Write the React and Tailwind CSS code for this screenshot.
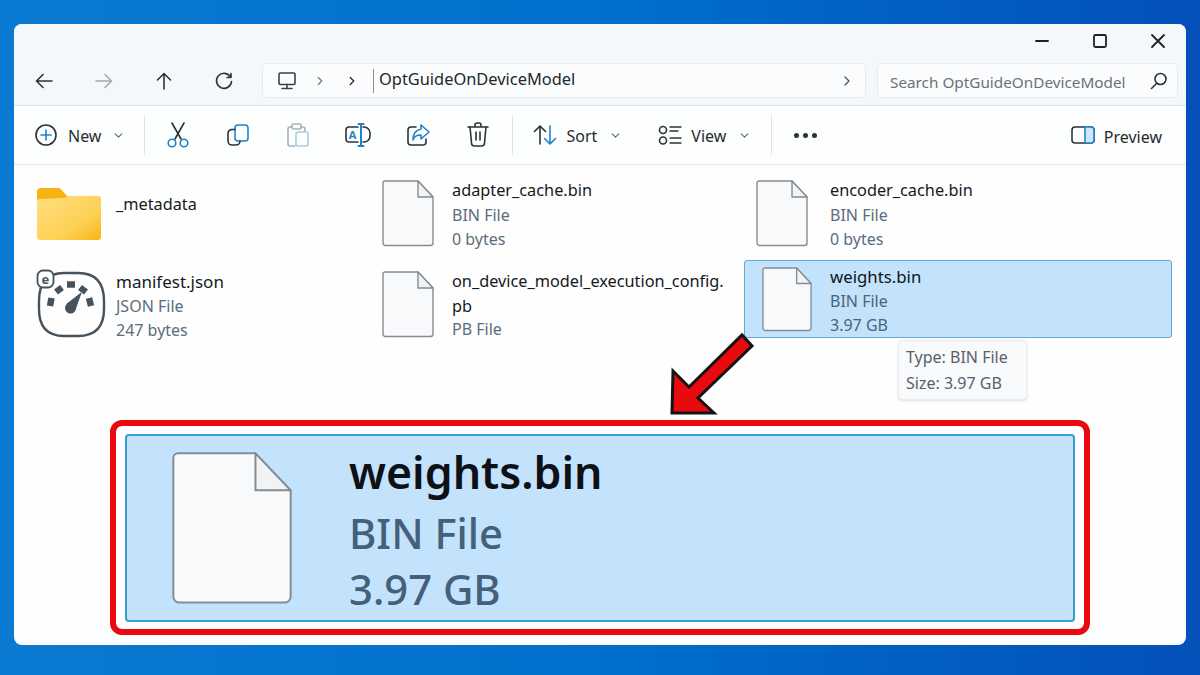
import { ChevronDown, ChevronRight } from 'lucide-react';

const FONT = "font-['Noto_Sans','Open_Sans',sans-serif]";

const Icon = ({ children, w = 24, h = 24, className = '' }) => (
  <svg
    width={w}
    height={h}
    viewBox={`0 0 ${w} ${h}`}
    fill="none"
    stroke="currentColor"
    strokeWidth="1.6"
    strokeLinecap="round"
    strokeLinejoin="round"
    className={className}
  >
    {children}
  </svg>
);

const FileIcon = ({ w = 52, h = 67, line = 1.4 }) => (
  <svg
    width={w}
    height={h}
    viewBox="0 0 52 67"
    preserveAspectRatio="none"
    fill="none"
    stroke="#858c93"
    strokeWidth={line}
    strokeLinejoin="round"
  >
    <path d="M3 1 H36 L51 17 V63 a2.5 2.5 0 0 1 -2.5 2.5 H3.5 A2.5 2.5 0 0 1 1 63 V3 a2 2 0 0 1 2 -2 Z" fill="#f8f9fb" />
    <path d="M36 1 V17 H51 Z" fill="#f1f3f5" />
  </svg>
);

const FolderIcon = () => (
  <svg width="66" height="54" viewBox="0 0 66 54">
    <defs>
      <linearGradient id="folderFront" x1="0" y1="0" x2="1" y2="1">
        <stop offset="0" stopColor="#ffe07f" />
        <stop offset="0.65" stopColor="#fdd055" />
        <stop offset="1" stopColor="#f9b412" />
      </linearGradient>
    </defs>
    <path d="M1 5 a4 4 0 0 1 4 -4 H22 a4 4 0 0 1 3 1.3 L31 9 H60 V30 H1 Z" fill="#f6b312" />
    <path d="M1 14 a3 3 0 0 1 3 -2 L28 11 L33 9 H62 a3 3 0 0 1 3 3 V50 a3 3 0 0 1 -3 3 H4 a3 3 0 0 1 -3 -3 Z" fill="url(#folderFront)" />
  </svg>
);

const ManifestIcon = () => (
  <svg width="70" height="70" viewBox="0 0 70 70" fill="none">
    <path d="M28 4 H42 C60 4 68 14 68 32 V40 C68 58 59 67 42 67 H28 C11 67 3 58 3 40 V32 C3 14 11 4 28 4 Z" stroke="#46535d" strokeWidth="2.4" />
    <rect x="1.500" y="1.500" width="16" height="17" rx="5.500" fill="#fdfefe" stroke="#46535d" strokeWidth="1.800" />
    <text x="9.500" y="14.500" textAnchor="middle" fontSize="13" fontWeight="700" fill="#46535d">e</text>
    <g stroke="#46535d" strokeWidth="6.5">
      <path d="M14 37 L15.500 29" />
      <path d="M20 23 L26 18.500" />
      <path d="M31 15.500 H39" />
      <path d="M44 18.500 L50 23" />
      <path d="M53 29 L55 37" />
    </g>
    <path d="M45 24 L39 41 L31 35 Z" fill="#46535d" stroke="#46535d" strokeWidth="1" strokeLinejoin="round" />
    <circle cx="34.500" cy="39" r="5.500" fill="#46535d" />
  </svg>
);

const NavButton = ({ children }) => (
  <div className="w-[60px] flex items-center justify-center text-[#2c3238]">{children}</div>
);

const ToolButton = ({ children }) => (
  <div className="w-[60px] flex items-center justify-center">{children}</div>
);

const Divider = () => <div className="w-px h-[40px] bg-[#dfe3e7]" />;

const FileItem = ({ icon, iconWidth, name, lines, top = 'pt-0', nameSize = 'text-[16.3px]' }) => (
  <div className={`flex pl-3 ${top}`}>
    <div className={`${iconWidth} shrink-0`}>{icon}</div>
    <div className="text-[16px] leading-[24px]">
      <div className={`${nameSize} leading-[25px] text-[#15191d]`}>{name}</div>
      {lines.map((line) => (
        <div key={line} className="text-[#5a6d7c]">{line}</div>
      ))}
    </div>
  </div>
);

export default function App() {
  return (
    <div className={`w-[1200px] h-[675px] overflow-hidden pt-[24px] pl-[14px] bg-linear-to-r from-[#0a7ad2] via-[#0070cc] to-[#0450b8] ${FONT}`}>
      <div className="relative w-[1172px] h-[621px] rounded-[8px] overflow-hidden bg-[#fefefe] flex flex-col">
        {/* title + address */}
        <div className="h-[82px] bg-[#f4f8fb] border-b border-[#dde3e8] shrink-0">
          <div className="h-[39px] flex justify-end -mr-[1px] pb-[5px] text-[#1d2226]">
            <div className="w-[58px] flex items-center justify-center">
              <Icon w={16} h={16}><path d="M2 8 H14" strokeWidth="1.8" /></Icon>
            </div>
            <div className="w-[58px] flex items-center justify-center">
              <Icon w={16} h={16}><rect x="2" y="2" width="12" height="12" rx="1.5" strokeWidth="1.8" /></Icon>
            </div>
            <div className="w-[58px] flex items-center justify-center">
              <Icon w={16} h={16}><path d="M2 2 L14 14 M14 2 L2 14" strokeWidth="1.8" /></Icon>
            </div>
          </div>
          <div className="h-[35px] flex">
            <NavButton>
              <Icon w={20} h={20}><path d="M18 10 H3 M9 3.5 L2.5 10 L9 16.5" /></Icon>
            </NavButton>
            <NavButton>
              <Icon w={20} h={20} className="text-[#a3a9ae]"><path d="M2 10 H17 M11 3.5 L17.5 10 L11 16.5" /></Icon>
            </NavButton>
            <NavButton>
              <Icon w={20} h={20}><path d="M10 18 V3 M3.5 9 L10 2.5 L16.5 9" /></Icon>
            </NavButton>
            <NavButton>
              <Icon w={20} h={20}><path d="M16.5 6 A7.5 7.5 0 1 0 17.5 10.5 M17 2.5 V6.5 H13" /></Icon>
            </NavButton>
            <div className="ml-2 w-[604px] h-[35px] flex items-center rounded-[5px] border border-[#e8ecef] bg-[#fafcfd] text-[16.4px] text-[#22272b]">
              <div className="w-[48px] flex justify-center text-[#3a4248]">
                <Icon w={20} h={20}>
                  <rect x="2" y="2" width="16" height="11.5" rx="1.2" />
                  <path d="M10 13.5 V17 M5 17.5 H15" />
                </Icon>
              </div>
              <ChevronRight size={14} className="ml-[2px] text-[#6f777d]" />
              <ChevronRight size={14} strokeWidth={2.4} className="ml-[18px] text-[#2c3238]" />
              <div className="ml-[14px] w-px h-[24px] bg-[#8a9095]" />
              <span className="ml-[5px] mb-[2px]">OptGuideOnDeviceModel</span>
              <ChevronRight size={16} strokeWidth={1.8} className="ml-auto mr-[10px] text-[#4a5258]" />
            </div>
            <div className="ml-[11px] w-[301px] h-[35px] flex items-center rounded-[5px] border border-[#e8ecef] bg-[#fafcfd] pl-[12px] text-[15.3px] text-[#6a7278]">
              <span className="pt-[3px]">Search OptGuideOnDeviceModel</span>
              <Icon w={20} h={20} className="ml-auto mr-[8px] text-[#2c3238]">
                <circle cx="11.5" cy="8" r="5.5" />
                <path d="M7.5 12.5 L2.5 17.5" />
              </Icon>
            </div>
          </div>
        </div>

        {/* toolbar */}
        <div className="h-[59px] shrink-0 bg-[#fdfefe] border-b border-[#e0e5e9] flex items-center text-[16px] text-[#262b30]">
          <div className="ml-[21px]">
            <Icon w={22} h={22} className="text-[#2c3238]">
              <circle cx="11" cy="11" r="10" />
              <path d="M11 6 V16 M6 11 H16" stroke="#1d84c8" />
            </Icon>
          </div>
          <span className="ml-[11px] mt-[2px]">New</span>
          <ChevronDown size={13} className="ml-[11px] text-[#5f676d]" />
          <div className="ml-[19px]"><Divider /></div>
          <div className="ml-[3px] flex">
            <ToolButton>
              <Icon w={24} h={26} className="text-[#2c3238]">
                <path d="M6 1 L15 17 M18 1 L9 17" />
                <circle cx="6" cy="21" r="3.8" stroke="#1d84c8" />
                <circle cx="18" cy="21" r="3.8" stroke="#1d84c8" />
              </Icon>
            </ToolButton>
            <ToolButton>
              <Icon w={24} h={24} className="text-[#2c3238]">
                <rect x="9" y="2" width="13" height="16" rx="3" stroke="#1d84c8" />
                <path d="M9 6.5 H6 a4 4 0 0 0 -4 4 V18 a4 4 0 0 0 4 4 H10 a4 4 0 0 0 4 -4" />
              </Icon>
            </ToolButton>
            <ToolButton>
              <Icon w={24} h={26} className="text-[#aab1b6]">
                <path d="M6 5 H4 a2 2 0 0 0 -2 2 V22 a2 2 0 0 0 2 2 H9 M15 5 H17 a2 2 0 0 1 2 2 V9" />
                <rect x="6" y="2" width="9" height="5" rx="1.5" />
                <rect x="10" y="10" width="12" height="14" rx="2" stroke="#a8cbe0" />
              </Icon>
            </ToolButton>
            <ToolButton>
              <Icon w={26} h={24} className="text-[#2c3238]">
                <path d="M13 4 H4 a3 3 0 0 0 -3 3 V16 a3 3 0 0 0 3 3 H13" />
                <path d="M18 4 h1 a6 6 0 0 1 6 6 v3 a6 6 0 0 1 -6 6 h-1" />
                <path d="M16 1 V23 M13.5 1 H18.500 M13.5 23 H18.5" stroke="#1d84c8" strokeWidth="2" />
                <text x="7.500" y="15.500" textAnchor="middle" fontSize="11" fontWeight="700" fill="#1d84c8" stroke="none">A</text>
              </Icon>
            </ToolButton>
            <ToolButton>
              <Icon w={24} h={24} className="text-[#2c3238]">
                <path d="M10 4 H5 a3 3 0 0 0 -3 3 V19 a3 3 0 0 0 3 3 H17 a3 3 0 0 0 3 -3 V16" />
                <path d="M15 2 L23 9 L15 16 V12 C11 12 8 13.500 7 17 C7 11 10 7 15 6 Z" stroke="#1d84c8" />
              </Icon>
            </ToolButton>
            <ToolButton>
              <Icon w={24} h={26} className="text-[#2c3238]">
                <path d="M2 5 H22 M9 5 V3 a2 2 0 0 1 2 -2 H13 a2 2 0 0 1 2 2 V5" />
                <path d="M4 5 L5.500 21 a3 3 0 0 0 3 3 H15.500 a3 3 0 0 0 3 -3 L20 5" />
                <path d="M10 10 V18 M14 10 V18" />
              </Icon>
            </ToolButton>
          </div>
          <div className="ml-[4px]"><Divider /></div>
          <div className="ml-[20px]">
            <Icon w={24} h={22} className="text-[#2c3238]">
              <path d="M7 20 V2 M1.500 7.500 L7 2 L12.500 7.500" />
              <path d="M17 2 V20 M11.500 14.500 L17 20 L22.500 14.500" stroke="#1d84c8" />
            </Icon>
          </div>
          <span className="ml-[9px] mt-[2px]">Sort</span>
          <ChevronDown size={13} className="ml-[12px] text-[#5f676d]" />
          <div className="ml-[36px]">
            <Icon w={24} h={22} className="text-[#2c3238]">
              <circle cx="5" cy="6" r="3.5" />
              <circle cx="5" cy="16.500" r="3.500" />
              <path d="M12 3 H23 M12 7 H20 M12 14 H23 M12 19 H23" strokeWidth="1.300" />
            </Icon>
          </div>
          <span className="ml-[9px] mt-[2px]">View</span>
          <ChevronDown size={13} className="ml-[12px] text-[#5f676d]" />
          <div className="ml-[20px]"><Divider /></div>
          <div className="ml-[22px] flex gap-[4px]">
            <div className="w-[5px] h-[5px] rounded-full bg-[#2c3238]" />
            <div className="w-[5px] h-[5px] rounded-full bg-[#2c3238]" />
            <div className="w-[5px] h-[5px] rounded-full bg-[#2c3238]" />
          </div>
          <div className="ml-auto flex items-center pr-[24px]">
            <Icon w={24} h={20} className="text-[#2c3238]">
              <rect x="1" y="2" width="22" height="16" rx="3" />
              <path d="M14 2 H20 a3 3 0 0 1 3 3 V15 a3 3 0 0 1 -3 3 H14 Z" fill="#cfe6f6" stroke="#1d84c8" />
            </Icon>
            <span className="ml-[9px] mt-[3px]">Preview</span>
          </div>
        </div>

        {/* files */}
        <div className="pt-[13px] pl-[10px] grid grid-cols-[346px_374px_428px] grid-rows-[78px_78px] gap-y-[4px] shrink-0">
          <FileItem
            iconWidth="w-[80px]"
            name="_metadata"
            lines={[]}
            top="pt-[14px]"
            icon={<div className="-mt-[5px]"><FolderIcon /></div>}
          />
          <FileItem
            iconWidth="w-[70px]"
            name="adapter_cache.bin"
            lines={['BIN File', '0 bytes']}
            icon={<div className="pt-[2px]"><FileIcon /></div>}
          />
          <FileItem
            iconWidth="w-[74px]"
            name="encoder_cache.bin"
            lines={['BIN File', '0 bytes']}
            icon={<div className="pt-[2px]"><FileIcon /></div>}
          />
          <FileItem
            iconWidth="w-[80px]"
            name="manifest.json"
            nameSize="text-[17px]"
            lines={['JSON File', '247 bytes']}
            top="pt-[9px]"
            icon={<ManifestIcon />}
          />
          <div className="flex pl-3 pt-[9px]">
            <div className="w-[70px] shrink-0 pt-[2px]"><FileIcon /></div>
            <div className="text-[16px] leading-[23px] w-[290px]">
              <div className="text-[16.3px] leading-[25px] text-[#15191d]">on_device_model_execution_config.</div>
              <div className="text-[16.3px] leading-[24px] text-[#15191d]">pb</div>
              <div className="text-[#5a6d7c]">PB File</div>
            </div>
          </div>
          <div className="relative flex pl-[17px] pt-[3px] bg-[#c3e2fb] border border-[#62a9d6] rounded-[3px]">
            <div className="w-[68px] shrink-0 pt-[3px]"><FileIcon w={50} h={65} /></div>
            <div className="text-[16px] leading-[24px]">
              <div className="text-[16.8px] leading-[25px] text-[#111518]">weights.bin</div>
              <div className="text-[#4a6579]">BIN File</div>
              <div className="text-[#4a6579]">3.97 GB</div>
            </div>
            <div className="absolute left-[153px] top-[79px] w-[129px] h-[60px] z-10 pl-[7px] pt-[3px] rounded-[4px] bg-[#f8fafb] border border-[#e9edf0] shadow-sm text-[16px] leading-[26px] text-[#56626d]">
              <div>Type: BIN File</div>
              <div>Size: 3.97 GB</div>
            </div>
          </div>
        </div>

        {/* callout */}
        <div className="ml-[96px] mt-[82px] w-[980px] h-[215px] rounded-[12px] border-[6px] border-[#e80a0e] bg-white pt-[8px] px-[9px]">
          <div className="h-[188px] flex rounded-[4px] border-2 border-[#3f9bd4] bg-[#c3e2fb] pl-[44px] pt-[15px]">
            <div className="w-[178px] shrink-0"><FileIcon w={122} h={155} line={0.85} /></div>
            <div className="-mt-[2px]">
              <div className="text-[44.6px] leading-[46px] font-semibold text-[#0d1115]">weights.bin</div>
              <div className="mt-[15px] text-[41.8px] leading-[46px] font-medium text-[#44607a]">BIN File</div>
              <div className="mt-[10px] text-[41.8px] leading-[46px] font-medium text-[#44607a]">3.97 GB</div>
            </div>
          </div>
        </div>

        {/* arrow */}
        <svg className="absolute left-[654px] top-[306px] z-20" width="90" height="90" viewBox="0 0 90 90">
          <path d="M4 83 L5 41 L21 57 L74 5 L84 16 L30 68 L46 83 Z" fill="#e80a0e" stroke="#141414" strokeWidth="3" strokeLinejoin="miter" />
        </svg>
      </div>
    </div>
  );
}
